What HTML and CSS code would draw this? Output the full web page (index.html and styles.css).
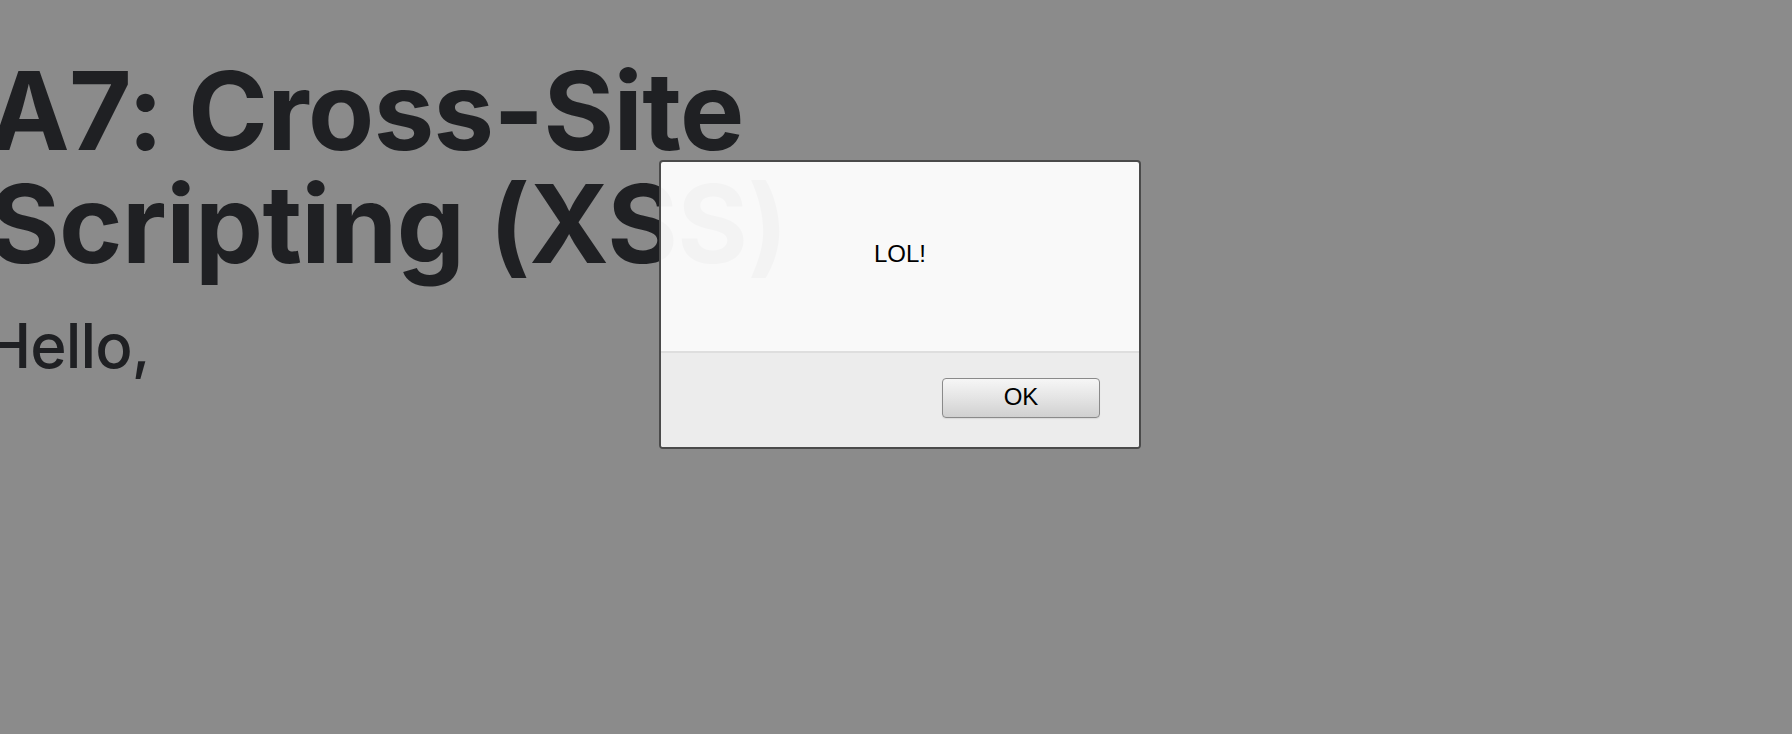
FILE: index.html
```html
<!DOCTYPE html>
<html lang="en">
<head>
<meta charset="utf-8">
<title>A7: Cross-Site Scripting (XSS)</title>
<link rel="stylesheet" href="styles.css">
</head>
<body>
<main class="page">
  <h1 class="title">A7: Cross-Site<br>Scripting (XSS)</h1>
  <p class="greeting">Hello,</p>
</main>
<div class="alert" role="alertdialog">
  <div class="alert-body">
    <span class="alert-message">LOL!</span>
  </div>
  <div class="alert-footer">
    <button class="alert-ok" type="button">OK</button>
  </div>
</div>
</body>
</html>
```

FILE: styles.css
```css
html, body {
  margin: 0;
  padding: 0;
}

body {
  background: #8b8b8b;
  width: 1792px;
  height: 734px;
  overflow: hidden;
  font-family: Inter, "Noto Sans", "Liberation Sans", sans-serif;
  color: #1f2023;
}

.page {
  margin-left: -11px;
  padding-top: 54px;
}

.title {
  margin: 0;
  font-size: 108px;
  line-height: 113px;
  font-weight: 700;
  letter-spacing: -0.6px;
}

.greeting {
  margin: 29px 0 0 -4px;
  font-size: 62px;
  line-height: 1.2;
  font-weight: 500;
  letter-spacing: -0.9px;
}

.alert {
  position: absolute;
  left: 659px;
  top: 160px;
  width: 482px;
  height: 289px;
  box-sizing: border-box;
  border: 2px solid #4a4a4a;
  border-radius: 4px;
  background: rgba(255, 255, 255, 0.95);
  display: flex;
  flex-direction: column;
  overflow: hidden;
  font-family: "Liberation Sans", Arial, sans-serif;
  color: #000;
}

.alert-body {
  height: 189px;
  display: flex;
  align-items: center;
  justify-content: center;
  border-bottom: 2px solid #dedede;
}

.alert-message {
  font-size: 24px;
  line-height: 1;
  margin-top: -6px;
}

.alert-footer {
  flex: 1;
  background: #ececec;
  display: flex;
  justify-content: flex-end;
  align-items: flex-start;
  padding: 25px 39px 0 0;
}

.alert-ok {
  width: 158px;
  height: 40px;
  box-sizing: border-box;
  border: 1px solid #8a8a8a;
  border-radius: 4px;
  background: linear-gradient(to bottom, #f6f6f6 0%, #e4e4e4 50%, #d0d0d0 100%);
  box-shadow: 0 1px 1px rgba(0, 0, 0, 0.08);
  font-family: "Liberation Sans", Arial, sans-serif;
  font-size: 24px;
  color: #000;
  padding: 0 0 3px;
}
```
